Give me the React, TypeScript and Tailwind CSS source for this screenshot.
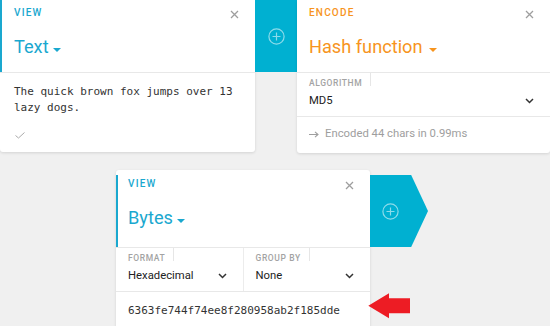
import React from 'react';

function CloseIcon() {
  return (
    <svg width="9" height="9" viewBox="0 0 9 9" className="mt-[3px] shrink-0">
      <path d="M1 1L8 8M8 1L1 8" stroke="#9e9e9e" strokeWidth="1.3" />
    </svg>
  );
}

function Caret({ color }: { color: string }) {
  return (
    <svg width="8" height="4" viewBox="0 0 8 4" className="mt-[6px] shrink-0">
      <path d="M0 0H8L4 4Z" fill={color} />
    </svg>
  );
}

function Chevron() {
  return (
    <svg width="9" height="6" viewBox="0 0 9 6" className="shrink-0">
      <path d="M1 1L4.5 4.5L8 1" stroke="#333" strokeWidth="1.5" fill="none" />
    </svg>
  );
}

function PlusCircle() {
  return (
    <svg width="17" height="17" viewBox="0 0 17 17">
      <circle cx="8.5" cy="8.5" r="7.6" stroke="rgba(255,255,255,0.55)" strokeWidth="1.2" fill="none" />
      <path d="M8.5 4.5V12.5M4.5 8.5H12.5" stroke="rgba(255,255,255,0.55)" strokeWidth="1.2" />
    </svg>
  );
}

function Field({ label, value, className = '' }: { label: string; value: string; className?: string }) {
  return (
    <div className={'flex-1 pb-[7px] pl-3 pr-4 ' + className}>
      <div className="h-[13px] w-fit border-r border-[#e6e6e6] pr-2 pt-[5px] text-[8.5px] font-medium uppercase leading-[10px] tracking-[0.6px] text-[#a3a3a3]">
        {label}
      </div>
      <div className="mt-[7px] flex h-[16px] items-center justify-between text-[11.3px] leading-[16px] text-[#222]">
        <span>{value}</span>
        <Chevron />
      </div>
    </div>
  );
}

export default function App() {
  return (
    <div className="relative h-[326px] w-[550px] overflow-hidden bg-[#f0f0f0] font-['Roboto',sans-serif]">
      <div className="flex items-start">
        <div className="w-[255px] rounded-b-[3px] bg-white shadow-[0_1px_3px_rgba(0,0,0,0.12)]">
          <div className="h-[72px] border-l-2 border-[#1aa8cf] pl-3 pr-4 pt-[7px]">
            <div className="flex items-start justify-between">
              <span className="text-[10px] font-medium leading-[12px] tracking-[1.2px] text-[#1aa8cf]">VIEW</span>
              <CloseIcon />
            </div>
            <div className="mt-[17px] flex items-center gap-[4px] text-[18.2px] leading-[22px] text-[#1aa8cf]">
              <span>Text</span>
              <Caret color="#1aa8cf" />
            </div>
          </div>
          <div className="h-[80px] border-t border-[#e8e8e8] pl-[14px] pr-3 pt-[11px]">
            <p className="font-['DejaVu_Sans_Mono',monospace] text-[11px] leading-[16px] text-[#333]">
              The quick brown fox jumps over 13 lazy dogs.
            </p>
            <svg width="10" height="7" viewBox="0 0 10 7" className="ml-[1px] mt-[16px]">
              <path d="M0.5 3.5L3.5 6L9.5 0.5" stroke="#aaa" strokeWidth="1" fill="none" />
            </svg>
          </div>
        </div>

        <div className="flex h-[72px] w-[42px] items-center justify-center bg-[#00b0d1]">
          <PlusCircle />
        </div>

        <div className="w-[253px] rounded-b-[3px] bg-white shadow-[0_1px_3px_rgba(0,0,0,0.12)]">
          <div className="h-[72px] pl-3 pr-4 pt-[7px]">
            <div className="flex items-start justify-between">
              <span className="text-[10px] font-medium leading-[12px] tracking-[1.2px] text-[#f7941d]">ENCODE</span>
              <CloseIcon />
            </div>
            <div className="mt-[17px] flex items-center gap-[6px] text-[18.2px] leading-[22px] text-[#f7941d]">
              <span>Hash function</span>
              <Caret color="#f7941d" />
            </div>
          </div>
          <div className="flex border-t border-[#e8e8e8]">
            <Field label="Algorithm" value="MD5" />
          </div>
          <div className="flex h-[37px] items-center gap-[6px] border-t border-[#e8e8e8] pb-[2px] pl-3 text-[11.3px] text-[#9e9e9e]">
            <svg width="10" height="7" viewBox="0 0 10 7" className="shrink-0">
              <path d="M0 3.5H9M6 0.8L9 3.5L6 6.2" stroke="#9e9e9e" strokeWidth="1.1" fill="none" />
            </svg>
            <span>Encoded 44 chars in 0.99ms</span>
          </div>
        </div>
      </div>

      <div className="ml-[116px] mt-[17px] flex items-start">
        <div className="w-[254px] rounded-t-[3px] bg-white pt-[5px] shadow-[0_1px_3px_rgba(0,0,0,0.12)]">
          <div className="h-[72px] border-l-2 border-[#1aa8cf] pl-[10px] pr-4 pt-[3px]">
            <div className="flex items-start justify-between">
              <span className="text-[10px] font-medium leading-[12px] tracking-[1.2px] text-[#1aa8cf]">VIEW</span>
              <CloseIcon />
            </div>
            <div className="mt-[17px] flex items-center gap-[4px] text-[18.2px] leading-[22px] text-[#1aa8cf]">
              <span>Bytes</span>
              <Caret color="#1aa8cf" />
            </div>
          </div>
          <div className="flex border-t border-[#e8e8e8]">
            <Field label="Format" value="Hexadecimal" className="border-r border-[#ececec]" />
            <Field label="Group by" value="None" />
          </div>
          <div className="h-[60px] border-t border-[#e8e8e8] pl-3 pt-[11px] font-['DejaVu_Sans_Mono',monospace] text-[11px] leading-[16px] text-[#333]">
            6363fe744f74ee8f280958ab2f185dde
          </div>
        </div>
        <div className="mt-[5px] flex h-[72px] w-[58px] items-center bg-[#00b0d1] pl-[12px] [clip-path:polygon(0_0,71%_0,100%_50%,71%_100%,0_100%)]">
          <PlusCircle />
        </div>
      </div>

      <svg width="46" height="30" viewBox="0 0 46 30" className="absolute left-[366px] top-[291px]">
        <path d="M2.3 14.7L23 2.3V7.3H44V22.3H23V27.3Z" fill="#ed1c24" />
      </svg>
    </div>
  );
}
